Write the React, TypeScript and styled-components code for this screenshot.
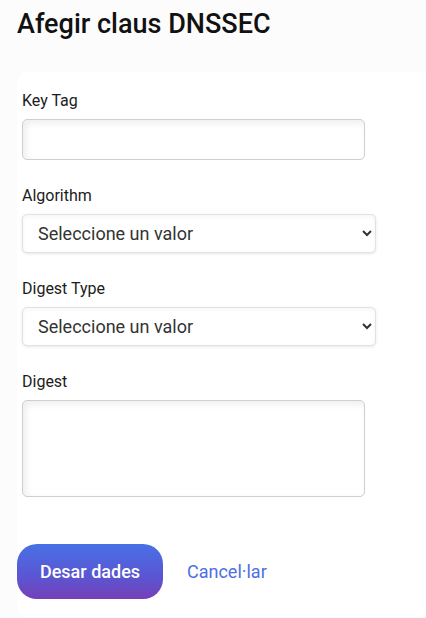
import React from "react";
import styled, { createGlobalStyle } from "styled-components";

const Global = createGlobalStyle`
  html, body { margin: 0; padding: 0; background: #fcfcfc; }
  body { font-family: Roboto, "Noto Sans", Arial, sans-serif; color: #1a1a1a; }
  * { box-sizing: border-box; }
`;

const Page = styled.div`
  padding: 0 0 0 17px;
`;

const Title = styled.h1`
  margin: 0;
  padding-top: 8px;
  height: 72px;
  font-size: 27px;
  line-height: 32px;
  font-weight: 500;
  color: #111;
`;

const Card = styled.form`
  background: #fff;
  border-radius: 10px 0 0 10px;
  padding: 19px 0 18px 5px;
`;

const Field = styled.div`
  display: flex;
  flex-direction: column;
  margin-bottom: 26px;
`;

const Label = styled.label`
  font-size: 16px;
  line-height: 19px;
  color: #1c1c1c;
  margin-bottom: 9px;
`;

const TextInput = styled.input`
  width: 343px;
  height: 41px;
  border: 1px solid #cfcfcf;
  border-radius: 5px;
  background: #fff;
  box-shadow: inset 3px 3px 7px rgba(0, 0, 0, 0.07);
  font: inherit;
  padding: 0 12px;
`;

const TextArea = styled.textarea`
  width: 343px;
  height: 97px;
  border: 1px solid #cfcfcf;
  border-radius: 5px;
  background: #fff;
  box-shadow: inset 3px 3px 7px rgba(0, 0, 0, 0.07);
  font: inherit;
  padding: 8px 12px;
  resize: none;
`;

const Select = styled.select`
  width: 354px;
  height: 39px;
  border: 1px solid #e2e2e2;
  border-radius: 5px;
  background: #fff;
  box-shadow: 0 1px 3px rgba(0, 0, 0, 0.1), inset 0 2px 4px rgba(0, 0, 0, 0.04);
  font-family: Roboto, Arial, sans-serif;
  font-size: 18px;
  color: #333;
  padding: 0 11px;
`;

const Actions = styled.div`
  display: flex;
  align-items: center;
  gap: 24px;
  margin-left: -5px;
  margin-top: 47px;
`;

const Primary = styled.button`
  width: 146px;
  height: 55px;
  border: none;
  border-radius: 20px;
  background: linear-gradient(180deg, #4871e6 0%, #5b55d2 60%, #7540b7 100%);
  color: #fff;
  font-family: Roboto, Arial, sans-serif;
  font-size: 18px;
  font-weight: 500;
  cursor: pointer;
`;

const Link = styled.a`
  color: #4d6fe6;
  font-size: 18px;
  text-decoration: none;
`;

export default function App() {
  return (
    <>
      <Global />
      <Page>
        <Title>Afegir claus DNSSEC</Title>
        <Card onSubmit={(e) => e.preventDefault()}>
          <Field>
            <Label>Key Tag</Label>
            <TextInput type="text" />
          </Field>
          <Field>
            <Label>Algorithm</Label>
            <Select defaultValue="">
              <option value="">Seleccione un valor</option>
            </Select>
          </Field>
          <Field>
            <Label>Digest Type</Label>
            <Select defaultValue="">
              <option value="">Seleccione un valor</option>
            </Select>
          </Field>
          <Field>
            <Label>Digest</Label>
            <TextArea />
          </Field>
          <Actions>
            <Primary type="submit">Desar dades</Primary>
            <Link href="#">Cancel·lar</Link>
          </Actions>
        </Card>
      </Page>
    </>
  );
}
